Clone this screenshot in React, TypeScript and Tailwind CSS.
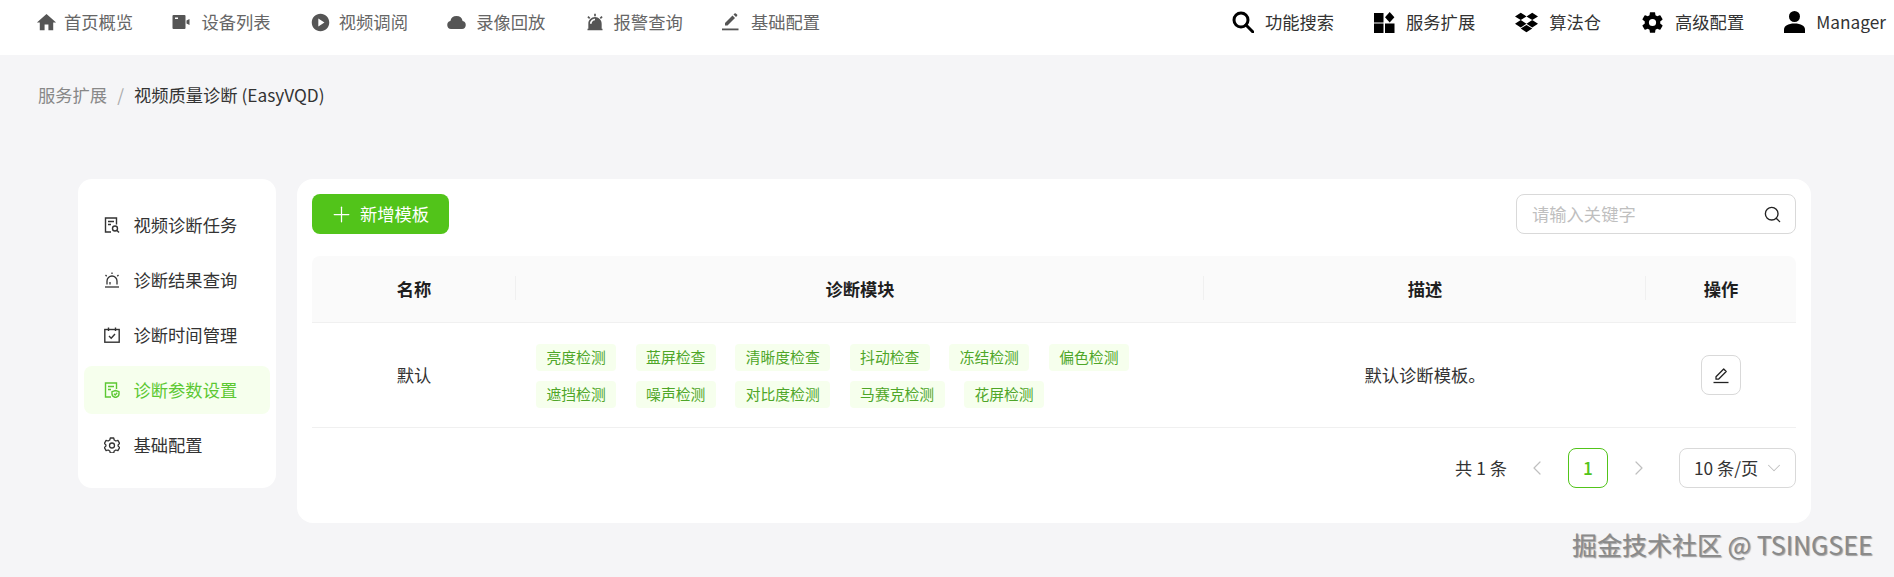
import { FaDropbox } from "react-icons/fa";
import { IoSettingsSharp } from "react-icons/io5";
import { MdHome, MdPlayCircle } from "react-icons/md";
import { RiAlarmWarningFill } from "react-icons/ri";
import { ChevronDown, ChevronLeft, ChevronRight, Plus, Search } from "lucide-react";
import type { ReactNode } from "react";

function VideoIcon() {
  return (
    <svg viewBox="0 0 19 16" className="h-[16px] w-[19px]" fill="#555">
      <path d="M1.5 1h11a1 1 0 0 1 1 1v12a1 1 0 0 1-1 1h-11a1 1 0 0 1-1-1V2a1 1 0 0 1 1-1z" />
      <path d="M14.5 6.5l3-1.5v6l-3-1.5z" />
      <rect x="3" y="3.5" width="3" height="1.5" fill="#fff" />
    </svg>
  );
}

function CloudIcon() {
  return (
    <svg viewBox="0 0 19 14" className="h-[14px] w-[19px]" fill="#555">
      <path d="M4 14a4 4 0 0 1-.6-7.900A6.200 6.200 0 0 1 9.500 1a6.200 6.200 0 0 1 6.100 5.100A4 4 0 0 1 15 14z" />
    </svg>
  );
}

function PenIcon() {
  return (
    <svg viewBox="0 0 17 18" className="h-[18px] w-[17px]" fill="#555">
      <path d="M3 12.500V10l7.500-7.500 2.500 2.500L5.500 12.500z" />
      <path d="M11.500 1.500l1-1a1 1 0 0 1 1.400 0l1.100 1.100a1 1 0 0 1 0 1.400l-1 1z" />
      <rect x="0" y="15.500" width="16.500" height="1.800" />
    </svg>
  );
}

function BoldSearch() {
  return (
    <svg viewBox="0 0 22 22" className="h-[22px] w-[22px]" fill="none" stroke="#000" strokeWidth="3">
      <circle cx="9" cy="9" r="7" />
      <path d="M14 14l7 7" strokeLinecap="round" />
    </svg>
  );
}

function AppsIcon() {
  return (
    <svg viewBox="0 0 21 21" className="h-[21px] w-[21px]" fill="#000">
      <rect x="0" y="1" width="9.500" height="9.500" />
      <rect x="0" y="11.500" width="9.500" height="9.500" />
      <rect x="11" y="11.500" width="9.500" height="9.500" />
      <path d="M15.700 0l4.700 5.200-4.700 5.200-4.700-5.200z" />
    </svg>
  );
}

function UserIcon() {
  return (
    <svg viewBox="0 0 21 22" className="h-[22px] w-[21px]" fill="#000">
      <circle cx="10.500" cy="5.500" r="5.500" />
      <path d="M0 22v-3.500C0 15 4 12.500 10.500 12.500S21 15 21 18.500V22z" />
    </svg>
  );
}

function DocSearch() {
  return (
    <svg viewBox="0 0 16 16" className="h-4 w-4" fill="none" stroke="currentColor" strokeWidth="1.400">
      <path d="M7 15H1.500V1h11v6.500" />
      <path d="M4 4.500h6M4 7.500h3" />
      <circle cx="11" cy="11.500" r="2.500" />
      <path d="M13 13.500l2 2" />
    </svg>
  );
}

function AlarmLine() {
  return (
    <svg viewBox="0 0 16 16" className="h-4 w-4" fill="none" stroke="currentColor" strokeWidth="1.300">
      <path d="M3 12.500V9a5 5 0 0 1 10 0v3.500" />
      <path d="M1 15h14" />
      <path d="M8 0.500v1.500M1.500 3l1.200 1.200M14.500 3l-1.200 1.200" />
      <path d="M6 12.500V10" />
    </svg>
  );
}

function CalendarCheck() {
  return (
    <svg viewBox="0 0 16 16" className="h-4 w-4" fill="none" stroke="currentColor" strokeWidth="1.400">
      <rect x="0.800" y="2.500" width="14.400" height="12.700" />
      <path d="M4.500 0.500v3.500M11.500 0.500v3.500" />
      <path d="M5 9l2.200 2.200L11 7" />
    </svg>
  );
}

function DocShield() {
  return (
    <svg viewBox="0 0 16 16" className="h-4 w-4" fill="none" stroke="currentColor" strokeWidth="1.400">
      <path d="M7 15H1.500V1h11v6" />
      <path d="M4 4.500h6M4 7.500h3" />
      <path d="M11.500 8.500l3.500 1.200v2.300c0 1.800-1.500 3-3.500 3.500-2-.5-3.500-1.700-3.500-3.500V9.700z" />
      <path d="M10 11.800l1.200 1.200 2-2.200" />
    </svg>
  );
}

function GearLine() {
  return (
    <svg viewBox="0 0 16 16" className="h-4 w-4" fill="none" stroke="currentColor" strokeWidth="1.300">
      <path d="M6.300 1h3.400l.5 2 1.700 1 2-.6 1.700 3-1.500 1.500v1.200l1.500 1.500-1.700 3-2-.6-1.700 1-.5 2H6.300l-.5-2-1.700-1-2 .6-1.700-3 1.500-1.500V7.900L.4 6.400l1.700-3 2 .6 1.700-1z" strokeLinejoin="round" />
      <circle cx="8" cy="8.500" r="2.500" />
    </svg>
  );
}

function EditLine() {
  return (
    <svg viewBox="0 0 16 17" className="h-[17px] w-[16px]" fill="none" stroke="#222" strokeWidth="1.300">
      <path d="M3 12.200V9.700L10.700 2l2.500 2.500-7.700 7.700z" strokeLinejoin="round" />
      <path d="M0.500 15.500h15" />
    </svg>
  );
}

const leftNav: { label: string; icon: ReactNode }[] = [
  { label: "首页概览", icon: <MdHome size={23} /> },
  { label: "设备列表", icon: <VideoIcon /> },
  { label: "视频调阅", icon: <MdPlayCircle size={21} /> },
  { label: "录像回放", icon: <CloudIcon /> },
  { label: "报警查询", icon: <RiAlarmWarningFill size={20} /> },
  { label: "基础配置", icon: <PenIcon /> },
];

const rightNav: { label: string; icon: ReactNode }[] = [
  { label: "功能搜索", icon: <BoldSearch /> },
  { label: "服务扩展", icon: <AppsIcon /> },
  { label: "算法仓", icon: <FaDropbox size={23} color="#000" /> },
  { label: "高级配置", icon: <IoSettingsSharp size={23} color="#000" /> },
  { label: "Manager", icon: <UserIcon /> },
];

const sideItems: { label: string; icon: ReactNode; active?: boolean }[] = [
  { label: "视频诊断任务", icon: <DocSearch /> },
  { label: "诊断结果查询", icon: <AlarmLine /> },
  { label: "诊断时间管理", icon: <CalendarCheck /> },
  { label: "诊断参数设置", icon: <DocShield />, active: true },
  { label: "基础配置", icon: <GearLine /> },
];

const modules = [
  ["亮度检测", "蓝屏检查", "清晰度检查", "抖动检查", "冻结检测", "偏色检测"],
  ["遮挡检测", "噪声检测", "对比度检测", "马赛克检测", "花屏检测"],
];

export default function App() {
  return (
    <div className="relative h-[577px] w-[1894px] overflow-hidden bg-[#f5f5f7] font-['Noto_Sans_CJK_SC','Noto_Sans',sans-serif] text-[17.300px] text-[#333]">
      <header className="flex h-[55px] items-start justify-between bg-white">
        <nav className="flex h-[44px] items-center pl-[35px]">
          {leftNav.map((item) => (
            <div key={item.label} className="flex w-[137.400px] items-center text-[#666]">
              <span className="flex w-[29px] items-center text-[#555]">{item.icon}</span>
              <span>{item.label}</span>
            </div>
          ))}
        </nav>
        <nav className="flex h-[44px] items-center gap-[40px] pr-[8px]">
          {rightNav.map((item) => (
            <div key={item.label} className="flex items-center gap-[11px] text-[#333]">
              {item.icon}
              <span>{item.label}</span>
            </div>
          ))}
        </nav>
      </header>

      <div className="mt-[26px] flex h-[28px] items-center gap-[10px] pl-[38px] leading-[28px]">
        <span className="text-[#888]">服务扩展</span>
        <span className="text-[#aaa]">/</span>
        <span className="text-[#333]">视频质量诊断 (EasyVQD)</span>
      </div>

      <div className="mt-[70px] flex items-start gap-[21px] pl-[78px]">
        <aside className="flex w-[198px] flex-col gap-[7px] rounded-[14px] bg-white px-[6px] pb-[19px] pt-[22px]">
          {sideItems.map((item) => (
            <div
              key={item.label}
              className={
                item.active
                  ? "flex h-[48px] items-center gap-[13.500px] rounded-[8px] bg-[#f6ffed] pl-[20px] text-[#5cc832]"
                  : "flex h-[48px] items-center gap-[13.500px] rounded-[8px] pl-[20px] text-[#333]"
              }
            >
              {item.icon}
              <span>{item.label}</span>
            </div>
          ))}
        </aside>

        <main className="w-[1514px] rounded-[16px] bg-white px-[15px] pb-[35px] pt-[15px]">
          <div className="flex items-center justify-between">
            <button className="flex h-[40px] w-[137px] items-center gap-[6px] rounded-[8px] bg-[#52c41a] pl-[17px] text-white">
              <Plus size={25} strokeWidth={1.200} />
              <span>新增模板</span>
            </button>
            <div className="flex h-[40px] w-[280px] items-center justify-between rounded-[8px] border border-[#d9d9d9] bg-white pl-[15px] pr-[13px]">
              <span className="text-[#bfbfbf]">请输入关键字</span>
              <Search size={19} color="#222" strokeWidth={1.700} />
            </div>
          </div>

          <div className="mt-[22px] grid grid-cols-[204px_688px_442px_150px]">
            <div className="relative flex h-[67px] items-center justify-center rounded-tl-[8px] border-b border-[#f0f0f0] bg-[#fafafa] font-bold text-[#1f1f1f]">
              名称
              <span className="absolute right-0 top-[20px] h-[24px] w-px bg-[#f0f0f0]" />
            </div>
            <div className="relative flex h-[67px] items-center justify-center border-b border-[#f0f0f0] bg-[#fafafa] font-bold text-[#1f1f1f]">
              诊断模块
              <span className="absolute right-0 top-[20px] h-[24px] w-px bg-[#f0f0f0]" />
            </div>
            <div className="relative flex h-[67px] items-center justify-center border-b border-[#f0f0f0] bg-[#fafafa] font-bold text-[#1f1f1f]">
              描述
              <span className="absolute right-0 top-[20px] h-[24px] w-px bg-[#f0f0f0]" />
            </div>
            <div className="flex h-[67px] items-center justify-center rounded-tr-[8px] border-b border-[#f0f0f0] bg-[#fafafa] font-bold text-[#1f1f1f]">
              操作
            </div>

            <div className="flex h-[105px] items-center justify-center border-b border-[#f0f0f0]">默认</div>
            <div className="flex h-[105px] flex-col justify-center gap-[10px] border-b border-[#f0f0f0] pl-[20px] pt-[1px]">
              {modules.map((row) => (
                <div key={row[0]} className="flex gap-[19.400px]">
                  {row.map((m) => (
                    <span
                      key={m}
                      className="flex h-[27px] items-center rounded-[4px] bg-[#f6ffed] px-[10.500px] text-[14.800px] text-[#4ea628]"
                    >
                      {m}
                    </span>
                  ))}
                </div>
              ))}
            </div>
            <div className="flex h-[105px] items-center justify-center border-b border-[#f0f0f0]">默认诊断模板。</div>
            <div className="flex h-[105px] items-center justify-center border-b border-[#f0f0f0]">
              <button className="flex h-[40px] w-[40px] items-center justify-center rounded-[8px] border border-[#d9d9d9] bg-white">
                <EditLine />
              </button>
            </div>
          </div>

          <div className="mt-[20px] flex items-center justify-end">
            <span className="mr-[10px] whitespace-pre">共 1 条</span>
            <span className="flex h-[40px] w-[40px] items-center justify-center text-[#bfbfbf]">
              <ChevronLeft size={24} strokeWidth={1.200} />
            </span>
            <span className="mx-[11px] flex h-[40px] w-[40px] items-center justify-center rounded-[8px] border border-[#52c41a] font-medium text-[#52c41a]">
              1
            </span>
            <span className="flex h-[40px] w-[40px] items-center justify-center text-[#bfbfbf]">
              <ChevronRight size={24} strokeWidth={1.200} />
            </span>
            <div className="ml-[20px] flex h-[40px] w-[117px] items-center justify-between rounded-[8px] border border-[#d9d9d9] pl-[14px] pr-[10px]">
              <span>10 条/页</span>
              <ChevronDown size={22} color="#bfbfbf" strokeWidth={1.100} />
            </div>
          </div>
        </main>
      </div>

      <div className="absolute left-[1572px] top-[528px] whitespace-nowrap text-[25px] leading-[32px] text-[#8a8a8a] [text-shadow:1px_1px_1px_rgba(0,0,0,0.35)]">
        掘金技术社区 @ TSINGSEE
      </div>
    </div>
  );
}
